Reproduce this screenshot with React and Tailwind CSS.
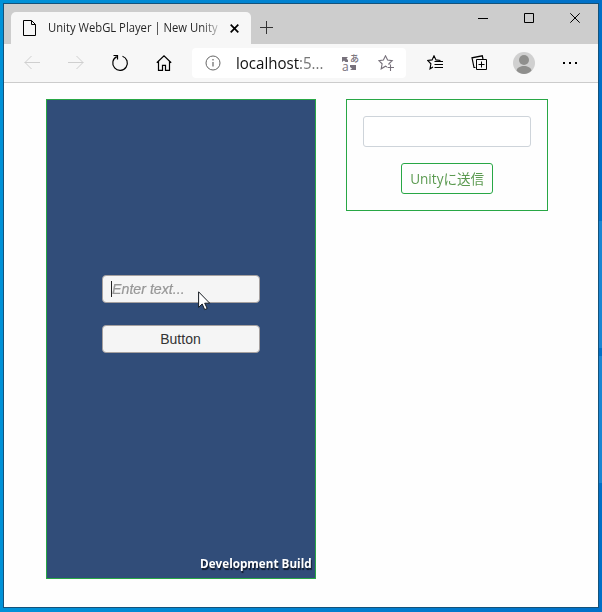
import React from 'react';

const UI = "font-['Open_Sans','Noto_Sans_CJK_JP',sans-serif]";

function Icon({ w, h, children, className = '' }) {
  return (
    <svg width={w} height={h} viewBox={`0 0 ${w} ${h}`} fill="none" stroke="currentColor" className={`block shrink-0 ${className}`}>
      {children}
    </svg>
  );
}

function TitleBar() {
  return (
    <div className="flex h-10 shrink-0 bg-[#cdcdcd]">
      <div className="mt-2 ml-[7px] flex h-8 w-60 items-center rounded-t-[5px] bg-[#f7f7f7] pl-3">
        <Icon w={13} h={16} className="text-black">
          <path d="M.5.5h8l4 4v11H.5zM8.500.5v4h4" />
        </Icon>
        <div className="ml-3 w-[172px] overflow-hidden whitespace-nowrap text-xs leading-4">
          <span className="inline-block origin-left scale-x-[0.938] bg-linear-to-r from-[#222] from-90% to-[#bbb] bg-clip-text text-transparent">
            Unity WebGL Player | New Unity
          </span>
        </div>
        <Icon w={9} h={9} className="ml-[10px] text-black">
          <path d="M.7.7l7.600 7.600M8.300.7L.7 8.300" strokeWidth="1.700" />
        </Icon>
      </div>
      <Icon w={13} h={13} className="mt-[17px] ml-[9px] text-[#333]">
        <path d="M6.500 0v13M0 6.500h13" />
      </Icon>
      <div className="mt-[9px] mr-[18px] ml-auto flex h-[10px] gap-9 text-black">
        <Icon w={10} h={10}>
          <path d="M0 5.500h10" />
        </Icon>
        <Icon w={10} h={10}>
          <path d="M.5.500h9v9h-9z" />
        </Icon>
        <Icon w={10} h={10}>
          <path d="M.3.300l9.400 9.400M9.700.300L.3 9.700" />
        </Icon>
      </div>
    </div>
  );
}

function AddressBar() {
  return (
    <div className="mx-[6px] flex h-[30px] w-[214px] items-center rounded bg-white pl-[13px]">
      <Icon w={16} h={16} className="text-[#666]">
        <circle cx="8" cy="8" r="7" />
        <path d="M8 7v4.500M8 4v1.500" strokeWidth="1.200" />
      </Icon>
      <div className="ml-[15px] w-[88px] whitespace-nowrap text-base leading-5">
        <span className="inline-block origin-left scale-x-[0.94] text-[#111]">
          localhost<span className="text-[#777]">:5...</span>
        </span>
      </div>
      <div className="ml-[18px] grid h-4 w-4 grid-cols-2 grid-rows-2 items-center text-[#77717b]">
        <Icon w={7} h={7}>
          <path d="M0 1h6L4.500 2.500 6 4v2H3.500L2 4.500 0 6z" fill="currentColor" stroke="none" />
        </Icon>
        <span className="text-[9px] leading-[8px] font-medium">あ</span>
        <span className="-mt-px text-[12px] leading-[8px]">a</span>
        <Icon w={7} h={7}>
          <path d="M0 1h6v5H0l2-1.500L0 3z" fill="currentColor" stroke="none" />
        </Icon>
      </div>
      <Icon w={16} h={16} className="ml-5 text-[#77717b]">
        <path d="M9 12l-1.500-.8-4.300 2.600.9-5L.8 5.600l4.600-.6L7.500.800l2.100 4.200 4.600.6-3.300 3.200.2 1M9.500 12.500H16M12.500 9.500V16" strokeWidth="1.100" />
      </Icon>
    </div>
  );
}

function Cell({ children, width = 'w-[45px]' }) {
  return <div className={`flex shrink-0 items-center justify-center ${width}`}>{children}</div>;
}

function Toolbar() {
  return (
    <div className="flex h-[39px] shrink-0 items-center border-b border-[#ccc] bg-[#f7f7f7] pl-[6px] text-black">
      <Cell width="w-11">
        <Icon w={16} h={14} className="text-[#cfcfcf]">
          <path d="M.7 6.500H16M7.500 0L1 6.500 7.500 13" />
        </Icon>
      </Cell>
      <Cell width="w-11">
        <Icon w={16} h={14} className="text-[#cfcfcf]">
          <path d="M0 6.500h15.300M8.500 0L15 6.500 8.500 13" />
        </Icon>
      </Cell>
      <Cell width="w-11">
        <Icon w={18} h={18}>
          <path d="M11.500 2.200a7.300 7.300 0 1 1-5.800.400M2.500 1.500H6.500V5.500" strokeWidth="1.200" />
        </Icon>
      </Cell>
      <Cell width="w-11">
        <Icon w={16} h={16}>
          <path d="M.800 7.800L8 .900l7.200 6.900M2.500 6.500v8.800h4v-5h3v5h4V6.500" strokeWidth="1.200" />
        </Icon>
      </Cell>
      <AddressBar />
      <Cell>
        <Icon w={16} h={16}>
          <path d="M6 12l-3 1.800.9-5L.700 5.500l4.400-.600L7 .800l2 4.100 4.500.600M7.500 6.500H16M7.500 9.500H16M7.500 12.500H16" strokeWidth="1.100" />
        </Icon>
      </Cell>
      <Cell>
        <Icon w={16} h={16} className="mr-[2px]">
          <path d="M12 4l-.7-3.200L1 2.800l2 9.700h1.500" strokeWidth="1.200" />
          <path d="M5.500 4.500h10v10h-10zM10.500 6.500v6M7.500 9.500h6" />
        </Icon>
      </Cell>
      <Cell>
        <Icon w={22} h={22} className="mr-[2px]">
          <circle cx="11" cy="11" r="11" fill="#d0d0d0" stroke="none" />
          <circle cx="11" cy="8" r="5" fill="#8f8f8d" stroke="none" />
          <path d="M3.500 18.500c1-6 14-6 15 0C15 23 7 23 3.500 18.500z" fill="#8f8f8d" stroke="none" />
        </Icon>
      </Cell>
      <Cell width="w-[46px]">
        <Icon w={14} h={2}>
          <path d="M0 1h2M6 1h2M12 1h2" strokeWidth="2" />
        </Icon>
      </Cell>
    </div>
  );
}

function UnityCanvas() {
  return (
    <div className="flex h-[480px] w-[270px] shrink-0 flex-col items-center border border-[#28a745] bg-[#314d79] font-['Liberation_Sans',sans-serif]">
      <div className="relative mt-[175px] flex h-7 w-[158px] items-center rounded-[4px] border border-[#a5a09f] bg-[#f5f5f5] pb-px pl-2">
        <span className="h-4 w-px bg-[#222]" />
        <span className="inline-block origin-left scale-x-[1.015] text-[14px] leading-4 text-[#979797] italic [-webkit-text-stroke:0.2px_#979797]">Enter text...</span>
        <svg className="absolute top-[15px] left-[95px]" width="13" height="20" viewBox="0 0 13 20">
          <path d="M.6.800v15.500L4.200 13l2.500 5.600 2.500-1.100-2.500-5.300h5z" fill="#fff" stroke="#161b22" />
        </svg>
      </div>
      <div className="mt-[22px] flex h-7 w-[158px] items-center justify-center rounded-[4px] border border-[#a5a09f] bg-[#f5f5f5] pr-px text-[14px] leading-4 text-[#333]">
        Button
      </div>
      <div className="mt-auto mr-[3px] mb-[7px] flex w-[112px] self-end text-[13px] leading-4 font-bold whitespace-nowrap text-white [text-shadow:1px_2px_1px_#111a2b]">
        <span className="inline-block origin-left scale-x-[0.9] font-['Open_Sans',sans-serif]">Development Build</span>
      </div>
    </div>
  );
}

function SendForm() {
  return (
    <div className="ml-[30px] flex h-28 w-[202px] shrink-0 flex-col items-center border border-[#28a745] pt-4">
      <input className="h-[31px] w-[168px] rounded-[3px] border border-[#ced4da] bg-white outline-none" />
      <button className="mt-4 flex h-[31px] w-[92px] items-center justify-center rounded-[3px] border border-[#28a745] text-[14px] leading-5 text-[#5b9a50]">
        <span className="inline-block shrink-0 scale-x-[0.97] whitespace-nowrap font-['Open_Sans','Noto_Sans_CJK_JP',sans-serif]">Unityに送信</span>
      </button>
    </div>
  );
}

export default function App() {
  return (
    <div className={`flex h-[612px] w-[602px] overflow-hidden bg-linear-to-r from-[#0092d8] to-[#0070c8] ${UI}`}>
      <div className="mt-[3px] ml-[3px] flex h-[605px] w-[596px] shrink-0 flex-col border border-[#14527a] bg-[#fefefe]">
        <TitleBar />
        <Toolbar />
        <main className="flex items-start pt-4 pl-[42px]">
          <UnityCanvas />
          <SendForm />
        </main>
      </div>
      <div className="flex w-[3px] flex-col pt-[221px]">
        <div className="h-[127px] bg-[#1a86d4]" />
        <div className="mt-2 h-[127px] bg-[#1a86d4]" />
      </div>
    </div>
  );
}
